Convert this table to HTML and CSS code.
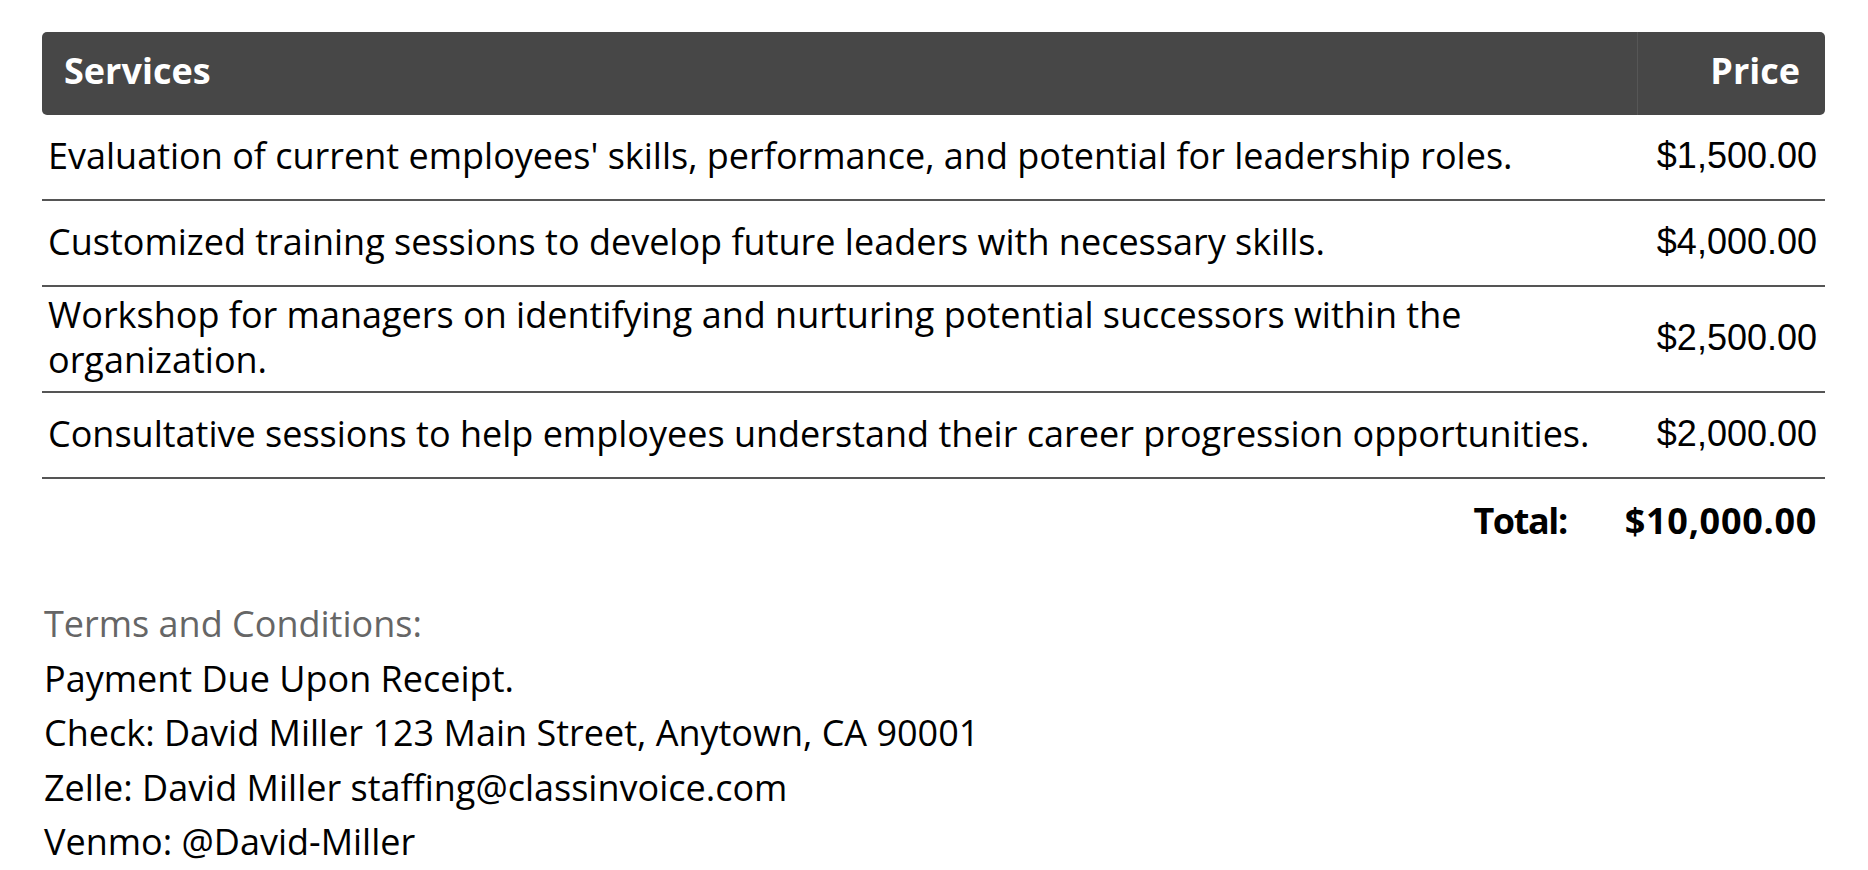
FILE: index.html
```html
<!DOCTYPE html>
<html lang="en">
<head>
<meta charset="utf-8">
<title>Invoice</title>
<link rel="stylesheet" href="styles.css">
</head>
<body>
<main class="invoice">
  <section class="services">
    <div class="head">
      <div class="head-desc">Services</div>
      <div class="head-price">Price</div>
    </div>
    <div class="row">
      <div class="desc">Evaluation of current employees' skills, performance, and potential for leadership roles.</div>
      <div class="price">$1,500.00</div>
    </div>
    <div class="row">
      <div class="desc">Customized training sessions to develop future leaders with necessary skills.</div>
      <div class="price">$4,000.00</div>
    </div>
    <div class="row">
      <div class="desc">Workshop for managers on identifying and nurturing potential successors within the organization.</div>
      <div class="price">$2,500.00</div>
    </div>
    <div class="row">
      <div class="desc">Consultative sessions to help employees understand their career progression opportunities.</div>
      <div class="price">$2,000.00</div>
    </div>
    <div class="total">
      <span class="total-label">Total:</span>
      <span class="total-amount">$10,000.00</span>
    </div>
  </section>
  <section class="terms">
    <div class="terms-title">Terms and Conditions:</div>
    <div class="terms-line">Payment Due Upon Receipt.</div>
    <div class="terms-line">Check: David Miller 123 Main Street, Anytown, CA 90001</div>
    <div class="terms-line">Zelle: David Miller staffing@classinvoice.com</div>
    <div class="terms-line">Venmo: @David-Miller</div>
  </section>
</main>
</body>
</html>
```
FILE: styles.css
```css
html, body {
  margin: 0;
  padding: 0;
  background: #ffffff;
}

body {
  font-family: "Open Sans", "Noto Sans", sans-serif;
  font-size: 36px;
  color: #000000;
}

.invoice {
  padding: 32px 43px 0 42px;
}

.services {
  display: flex;
  flex-direction: column;
}

.head {
  display: flex;
  height: 83px;
  background: #474747;
  border-radius: 5px;
  color: #ffffff;
  font-weight: 700;
  line-height: 45px;
  overflow: hidden;
}

.head-desc {
  flex: 1;
  display: flex;
  align-items: center;
  padding: 0 0 6px 22px;
}

.head-price {
  width: 162px;
  display: flex;
  align-items: center;
  justify-content: flex-end;
  padding: 0 25px 6px 0;
  border-left: 1px solid #565656;
}

.row {
  display: flex;
  align-items: center;
  box-sizing: border-box;
  min-height: 86px;
  padding: 5px 0 9px;
  border-bottom: 2px solid #555555;
  line-height: 45px;
}

.desc {
  flex: 1;
  padding-left: 6px;
}

.price {
  width: 180px;
  padding-right: 8px;
  text-align: right;
  font-family: "Liberation Sans", Arial, sans-serif;
  font-size: 36px;
}

.total {
  display: flex;
  justify-content: flex-end;
  align-items: center;
  gap: 58px;
  padding: 18.5px 8px 0 0;
  line-height: 45px;
  font-weight: 700;
}

.total-label {
  letter-spacing: -1.4px;
}

.total-amount {
  letter-spacing: 0.7px;
}

.terms {
  padding: 54.5px 0 0 2px;
  line-height: 54.5px;
}

.terms-title {
  color: #666666;
}
```
